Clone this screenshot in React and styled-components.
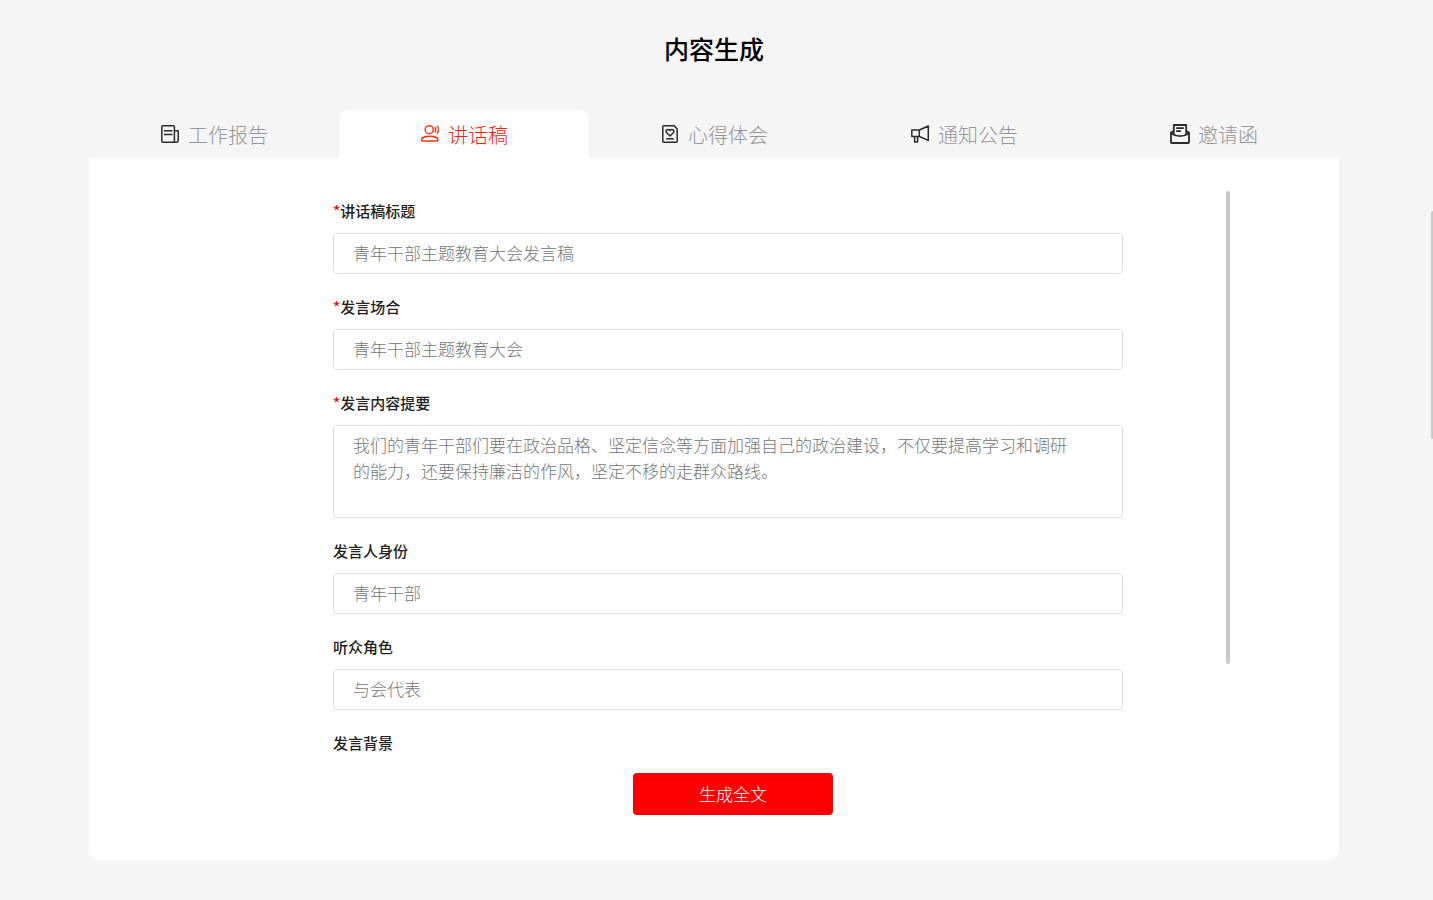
import React, { useState } from "react";
import styled, { createGlobalStyle } from "styled-components";

const GlobalStyle = createGlobalStyle`
  *, *::before, *::after { box-sizing: border-box; }
  body {
    margin: 0;
    background: #f5f5f5;
    font-family: "Liberation Sans", "Noto Sans CJK SC", sans-serif;
    font-weight: 300;
  }
  button, input, textarea { font: inherit; }
`;

const Page = styled.div`
  position: relative;
  min-height: 100vh;
  padding: 32px 94px 40px 89px;
`;

const Title = styled.h1`
  margin: 0 0 42px;
  font-size: 25px;
  line-height: 36px;
  font-weight: 500;
  text-align: center;
  color: #000;
`;

const TabBar = styled.nav`
  display: grid;
  grid-template-columns: repeat(5, 1fr);
`;

const Tab = styled.button`
  display: flex;
  align-items: center;
  justify-content: center;
  gap: 8px;
  height: 48px;
  padding: 0;
  border: 0;
  border-radius: 8px 8px 0 0;
  background: ${(p) => (p.$active ? "#fff" : "transparent")};
  color: ${(p) => (p.$active ? "#ff1a0a" : "#95969c")};
  font-size: 20px;
  line-height: 28px;
  cursor: pointer;
`;

const TabText = styled.span`
  padding-top: 3px;
`;

const TabIcon = styled.svg`
  width: 20px;
  height: 20px;
  flex: none;
  fill: none;
  stroke: ${(p) => (p.$active ? "#fa3a14" : "#2b2b2b")};
  stroke-width: 1.5;
  stroke-linejoin: round;
`;

const Panel = styled.main`
  padding: 30px 106px 45px 134px;
  border-radius: 0 0 10px 10px;
  background: #fff;
`;

const ScrollArea = styled.div`
  position: relative;
  height: calc(100vh - 330px);
  min-height: 300px;
  overflow: hidden;
`;

const Form = styled.form`
  display: flex;
  flex-direction: column;
  gap: 24px;
  padding: 14px 110px 0;
`;

const ScrollThumb = styled.span`
  position: absolute;
  top: 3px;
  right: 3px;
  width: 4px;
  height: 83%;
  border-radius: 2px;
  background: #c9c9c9;
`;

const PageThumb = styled.span`
  position: absolute;
  top: 211px;
  right: 0;
  width: 2px;
  height: 228px;
  border-radius: 2px 0 0 2px;
  background: #c9c9c9;
`;

const Field = styled.div`
  display: flex;
  flex-direction: column;
  gap: 11px;
`;

const Label = styled.label`
  font-size: 15px;
  line-height: 20px;
  font-weight: 500;
  color: #222;
`;

const Required = styled.span`
  font-family: "Noto Sans CJK SC", sans-serif;
  line-height: 1;
  color: #f00;
`;

const TextInput = styled.input`
  width: 100%;
  height: 41px;
  padding: 0 19px 2px;
  border: 1px solid #dcdfe6;
  border-radius: 4px;
  background: #fff;
  color: #75767a;
  font-size: 17px;
  outline: none;
`;

const TextArea = styled.textarea`
  display: block;
  width: 100%;
  height: 93px;
  padding: 8px 50px 7px 19px;
  border: 1px solid #dcdfe6;
  border-radius: 4px;
  background: #fff;
  color: #75767a;
  font-size: 17px;
  line-height: 26px;
  resize: none;
  outline: none;
  overflow: hidden;
`;

const Actions = styled.div`
  display: flex;
  justify-content: center;
  padding: 15px 0 0 10px;
`;

const SubmitButton = styled.button`
  width: 200px;
  height: 42px;
  padding: 0 0 2px;
  border: 0;
  border-radius: 4px;
  background: #f00;
  color: #fff;
  font-size: 17px;
  cursor: pointer;
`;

const tabs = [
  {
    name: "工作报告",
    icon: (
      <>
        <rect x="1.8" y="1.8" width="12.6" height="16.4" rx="1" />
        <path d="M14.4 6.8h3.8v10a1.4 1.4 0 0 1-1.4 1.4h-3.2M4 6.8h8.5M4 10.6h8.5" />
      </>
    ),
  },
  {
    name: "讲话稿",
    icon: (
      <>
        <circle cx="9.2" cy="5.7" r="4" />
        <path d="M1.7 17v-1.8c0-1.5 3.4-2.9 8-2.9s8 1.4 8 2.9V17zM14.8 3.2c1 1.5 1 3.7 0 5.2M17 1.8c2 2.4 2 5.8 0 8" />
      </>
    ),
  },
  {
    name: "心得体会",
    icon: (
      <>
        <path d="M3.8 1.8h10.5L17.2 5v12.2a1 1 0 0 1-1 1H3.8a1 1 0 0 1-1-1V2.8a1 1 0 0 1 1-1z" />
        <path d="M10 12 6.7 8.7c-1.6-2 1-4.6 3.3-2.3 2.3-2.3 4.9.3 3.3 2.3zM6.2 14.8h7.6" />
      </>
    ),
  },
  {
    name: "通知公告",
    icon: (
      <path d="M1.8 6h7.5v6.5H1.8zM9.3 6l9-4v14.4l-9-3.9M4.6 12.5V18h3v-5.5" />
    ),
  },
  {
    name: "邀请函",
    icon: (
      <>
        <path
          strokeWidth="1.8"
          d="M3.8 7 1 8.6V18.2a.8.8 0 0 0 .8.8h16.4a.8.8 0 0 0 .8-.8V8.6L16.2 7M1 9.2c3 2 6 3 9 3s6-1 9-3"
        />
        <path strokeWidth="1.8" d="M3.8 10.5V1h12.4v9.5M6.2 4.2h7.6M6.2 7.2h4.8" />
      </>
    ),
  },
];

const fields = [
  { id: "title", label: "讲话稿标题", required: true, value: "青年干部主题教育大会发言稿" },
  { id: "occasion", label: "发言场合", required: true, value: "青年干部主题教育大会" },
  {
    id: "summary",
    label: "发言内容提要",
    required: true,
    multiline: true,
    value:
      "我们的青年干部们要在政治品格、坚定信念等方面加强自己的政治建设，不仅要提高学习和调研的能力，还要保持廉洁的作风，坚定不移的走群众路线。",
  },
  { id: "speaker", label: "发言人身份", value: "青年干部" },
  { id: "audience", label: "听众角色", value: "与会代表" },
  { id: "background", label: "发言背景", value: "" },
];

export default function App() {
  const [active, setActive] = useState(1);
  return (
    <Page>
      <GlobalStyle />
      <Title>内容生成</Title>
      <TabBar>
        {tabs.map((tab, i) => (
          <Tab key={tab.name} type="button" $active={i === active} onClick={() => setActive(i)}>
            <TabIcon viewBox="0 0 20 20" aria-hidden="true" $active={i === active}>
              {tab.icon}
            </TabIcon>
            <TabText>{tab.name}</TabText>
          </Tab>
        ))}
      </TabBar>
      <Panel>
        <ScrollArea>
          <Form id="speech-form" onSubmit={(e) => e.preventDefault()}>
            {fields.map((f) => (
              <Field key={f.id}>
                <Label htmlFor={f.id}>
                  {f.required && <Required>*</Required>}
                  {f.label}
                </Label>
                {f.multiline ? (
                  <TextArea id={f.id} defaultValue={f.value} />
                ) : (
                  <TextInput id={f.id} type="text" defaultValue={f.value} />
                )}
              </Field>
            ))}
          </Form>
          <ScrollThumb />
        </ScrollArea>
        <Actions>
          <SubmitButton type="submit" form="speech-form">生成全文</SubmitButton>
        </Actions>
      </Panel>
      <PageThumb />
    </Page>
  );
}
